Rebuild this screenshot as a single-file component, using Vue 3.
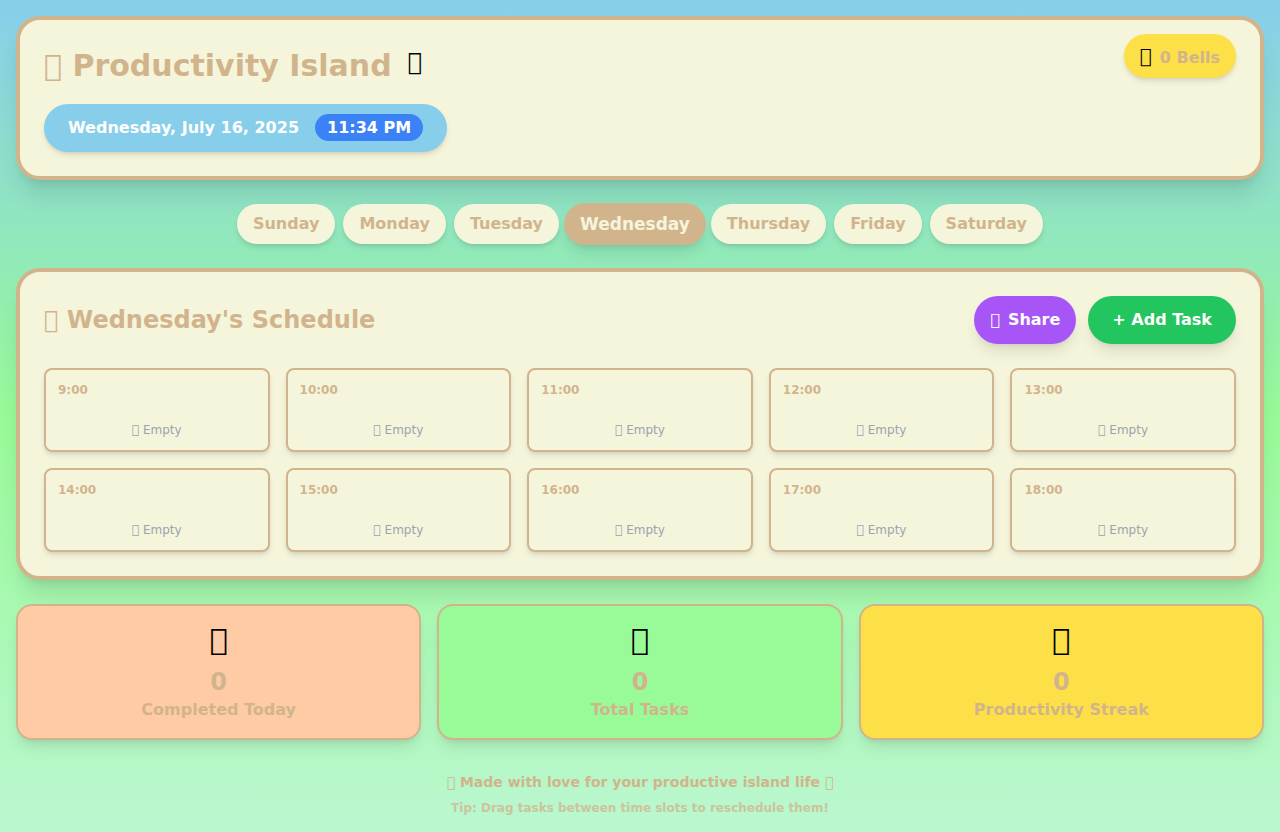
<script setup>
import { ref } from 'vue'

const days = ['Sunday', 'Monday', 'Tuesday', 'Wednesday', 'Thursday', 'Friday', 'Saturday']
const selected = ref('Wednesday')
const hours = [9, 10, 11, 12, 13, 14, 15, 16, 17, 18]

// Private-use code point, drawn as the font's empty box
const glyph = '\u{F0000}'

const stats = [
  { value: 0, label: 'Completed Today', tone: 'peach' },
  { value: 0, label: 'Total Tasks', tone: 'mint' },
  { value: 0, label: 'Productivity Streak', tone: 'gold' },
]
</script>

<template>
  <div class="page">
    <header class="panel header">
      <div class="intro">
        <div class="title-row">
          <h1>{{ glyph }} Productivity Island</h1>
          <span class="moon">{{ glyph }}</span>
        </div>
        <div class="date-pill">
          <span>Wednesday, July 16, 2025</span>
          <span class="time">11:34 PM</span>
        </div>
      </div>
      <div class="bells">
        <span class="bells-icon">{{ glyph }}</span>
        <span>0 Bells</span>
      </div>
    </header>

    <nav class="days">
      <button
        v-for="day in days"
        :key="day"
        type="button"
        class="day"
        :class="{ active: day === selected }"
        @click="selected = day"
      >{{ day }}</button>
    </nav>

    <main class="panel schedule">
      <div class="schedule-head">
        <h2>{{ glyph }} {{ selected }}'s Schedule</h2>
        <div class="actions">
          <button type="button" class="action share"><span>{{ glyph }}</span><span>Share</span></button>
          <button type="button" class="action add">+ Add Task</button>
        </div>
      </div>
      <ul class="slots">
        <li v-for="hour in hours" :key="hour" class="slot">
          <span class="slot-time">{{ hour }}:00</span>
          <span class="slot-empty">{{ glyph }} Empty</span>
        </li>
      </ul>
    </main>

    <section class="stats">
      <div v-for="stat in stats" :key="stat.label" class="stat" :class="stat.tone">
        <div class="stat-icon">{{ glyph }}</div>
        <div class="stat-value">{{ stat.value }}</div>
        <div class="stat-label">{{ stat.label }}</div>
      </div>
    </section>

    <footer>
      <p class="made">{{ glyph }} Made with love for your productive island life {{ glyph }}</p>
      <p class="tip">Tip: Drag tasks between time slots to reschedule them!</p>
    </footer>
  </div>
</template>

<style>
body {
  margin: 0;
}
</style>

<style scoped>
.page,
.page * {
  box-sizing: border-box;
}
.page {
  min-height: 100vh;
  padding: 16px;
  background: linear-gradient(180deg, #87ceeb 0%, #98fb98 50%, #bbf7d0 100%);
  color: #000;
  font-family: "DejaVu Sans", sans-serif;
  font-size: 16px;
  line-height: 24px;
}
h1,
h2,
p,
ul {
  margin: 0;
  padding: 0;
}
button {
  border: 0;
  font: inherit;
  font-weight: 700;
  cursor: pointer;
}
.panel {
  margin-bottom: 24px;
  border: 4px solid #d2b48c;
  border-radius: 24px;
  background: #f5f5dc;
  box-shadow: 0 20px 25px -5px rgba(0, 0, 0, 0.1), 0 8px 10px -6px rgba(0, 0, 0, 0.1);
}
.header {
  display: flex;
  justify-content: space-between;
  align-items: flex-start;
  padding: 14px 24px 24px;
}
.intro {
  padding-top: 10px;
}
.title-row {
  display: flex;
  align-items: flex-start;
  gap: 16px;
  margin-bottom: 16px;
}
h1 {
  color: #d2b48c;
  font-size: 30px;
  line-height: 44px;
}
.moon {
  font-size: 24px;
  line-height: 36px;
}
.date-pill {
  display: inline-block;
  padding: 12px 24px;
  border-radius: 24px;
  background: #87ceeb;
  color: #fff;
  font-weight: 700;
  box-shadow: 0 4px 6px -1px rgba(0, 0, 0, 0.1), 0 2px 4px -2px rgba(0, 0, 0, 0.1);
}
.time {
  margin-left: 16px;
  padding: 4px 12px;
  border-radius: 16px;
  background: #3b82f6;
}
.bells {
  display: flex;
  align-items: baseline;
  gap: 8px;
  padding: 8px 16px;
  border-radius: 24px;
  background: #fde047;
  color: #d2b48c;
  font-weight: 700;
  box-shadow: 0 4px 6px -1px rgba(0, 0, 0, 0.1), 0 2px 4px -2px rgba(0, 0, 0, 0.1);
}
.bells-icon {
  color: #000;
  font-size: 20px;
  font-weight: 400;
  line-height: 28px;
}
.days {
  display: flex;
  flex-wrap: wrap;
  justify-content: center;
  gap: 8px;
  margin-bottom: 24px;
}
.day {
  padding: 8px 16px;
  border-radius: 24px;
  background: #f5f5dc;
  color: #d2b48c;
  box-shadow: 0 4px 6px -1px rgba(0, 0, 0, 0.1), 0 2px 4px -2px rgba(0, 0, 0, 0.1);
}
.day.active {
  margin: -1px -3px;
  padding: 9px 16px;
  background: #d2b48c;
  color: #f5f5dc;
  font-size: 17px;
  box-shadow: 0 10px 15px -3px rgba(0, 0, 0, 0.1), 0 4px 6px -4px rgba(0, 0, 0, 0.1);
}
.schedule {
  padding: 24px;
}
.schedule-head {
  display: flex;
  justify-content: space-between;
  align-items: center;
  margin-bottom: 24px;
}
h2 {
  color: #d2b48c;
  font-size: 24px;
  line-height: 32px;
}
.actions {
  display: flex;
  gap: 12px;
}
.action {
  display: flex;
  gap: 8px;
  padding: 12px 24px;
  border-radius: 24px;
  color: #fff;
  box-shadow: 0 10px 15px -3px rgba(0, 0, 0, 0.1), 0 4px 6px -4px rgba(0, 0, 0, 0.1);
}
.share {
  padding: 12px 16px;
  background: #a855f7;
}
.add {
  background: #22c55e;
}
.slots {
  display: grid;
  grid-template-columns: repeat(5, 1fr);
  gap: 16px;
  list-style: none;
}
.slot {
  display: flex;
  flex-direction: column;
  gap: 24px;
  padding: 12px;
  border: 2px solid #d2b48c;
  border-radius: 8px;
  background: #f5f5dc;
  font-size: 12px;
  line-height: 16px;
  box-shadow: 0 4px 6px -1px rgba(0, 0, 0, 0.1), 0 2px 4px -2px rgba(0, 0, 0, 0.1);
}
.slot-time {
  color: #d2b48c;
  font-weight: 700;
}
.slot-empty {
  color: #9ca3af;
  text-align: center;
}
.stats {
  display: grid;
  grid-template-columns: repeat(3, 1fr);
  gap: 16px;
}
.stat {
  padding: 16px;
  border: 2px solid #d2b48c;
  border-radius: 16px;
  color: #d2b48c;
  font-weight: 700;
  text-align: center;
  box-shadow: 0 10px 15px -3px rgba(0, 0, 0, 0.1), 0 4px 6px -4px rgba(0, 0, 0, 0.1);
}
.peach {
  background: #ffcba4;
}
.mint {
  background: #98fb98;
}
.gold {
  background: #fde047;
}
.stat-icon {
  margin-bottom: 8px;
  color: #000;
  font-size: 30px;
  font-weight: 400;
  line-height: 36px;
}
.stat-value {
  font-size: 24px;
  line-height: 32px;
}
footer {
  margin-top: 32px;
  color: #d2b48c;
  font-weight: 700;
  text-align: center;
}
.made {
  font-size: 14px;
  line-height: 20px;
}
.tip {
  margin-top: 8px;
  font-size: 12px;
  line-height: 16px;
  opacity: 0.75;
}
</style>
